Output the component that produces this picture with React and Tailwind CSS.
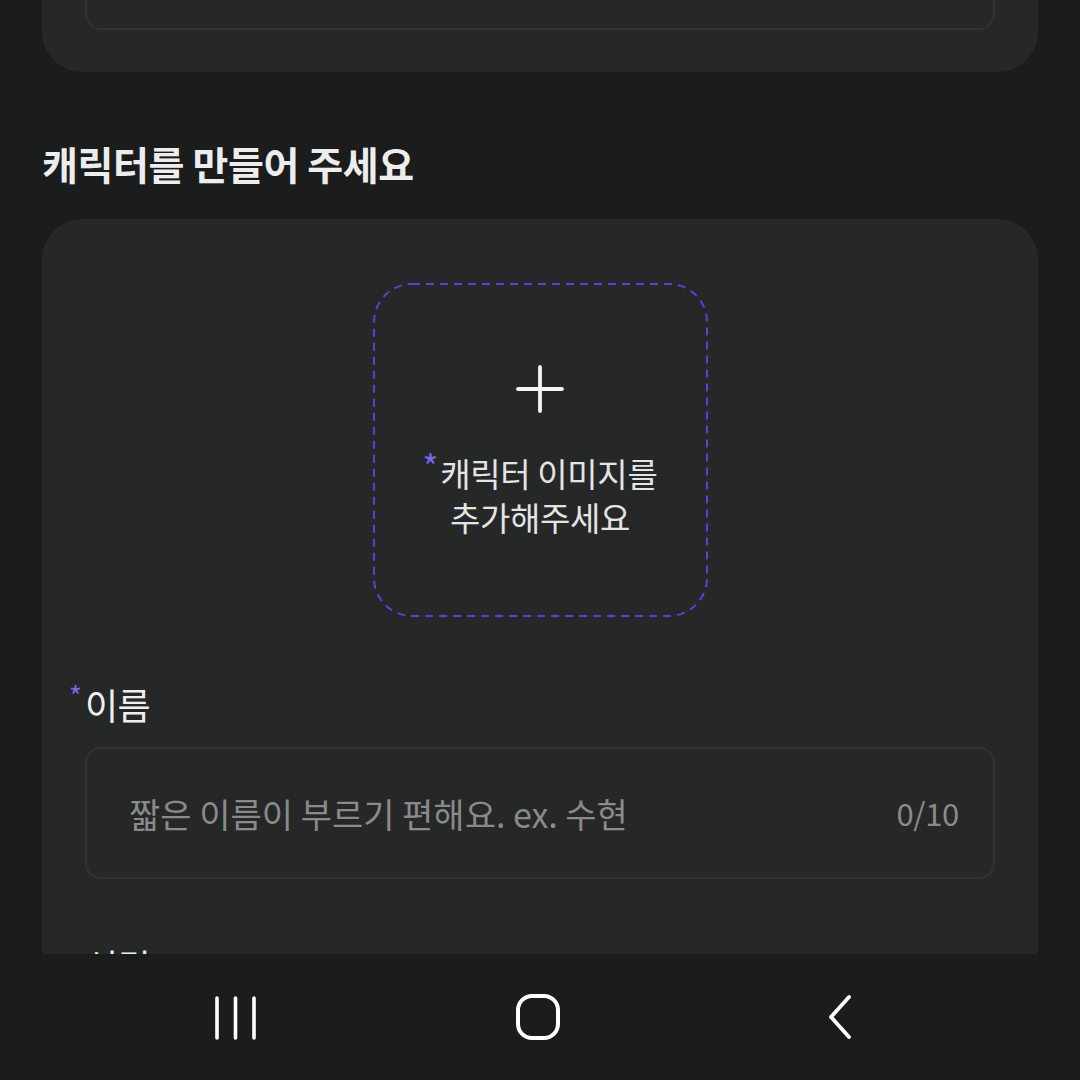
import React from "react";

const FONT = { fontFamily: '"Noto Sans CJK KR", "Noto Sans", sans-serif' };

function PlusIcon() {
  return (
    <svg width="48" height="48" viewBox="0 0 48 48" className="block">
      <path d="M24 2 V46 M2 24 H46" stroke="#f5f5f5" strokeWidth="3.8" strokeLinecap="round" fill="none" />
    </svg>
  );
}

function DashedBorder() {
  return (
    <svg className="absolute inset-0 pointer-events-none" width="335" height="334" viewBox="0 0 335 334">
      <rect x="1" y="1" width="333" height="332" rx="38" ry="38" fill="none" stroke="#5b3fd9" strokeWidth="2" strokeDasharray="8 6" />
    </svg>
  );
}

export default function App() {
  return (
    <div className="w-[1080px] h-[1080px] bg-[#1b1c1c] flex flex-col overflow-hidden" style={FONT}>
      <div className="h-[954px] overflow-hidden px-[42px] flex flex-col shrink-0">
        {/* previous card (bottom part visible) */}
        <div className="h-[72px] shrink-0 bg-[#262727] rounded-b-[40px] px-[43px] flex flex-col justify-end pb-[42px]">
          <div className="h-[40px] border-2 border-t-0 border-[#313232] rounded-b-[16px]" />
        </div>

        <h2 className="mt-[67px] mb-[32px] text-[39px] leading-[48px] font-bold tracking-[-0.01em] text-[#ededed]">
          캐릭터를 만들어 주세요
        </h2>

        <div className="bg-[#262727] rounded-[40px] pt-[64px] flex flex-col shrink-0 h-[800px]">
          <div className="flex justify-center">
            <div className="relative w-[335px] h-[334px] flex flex-col items-center pt-[82px]">
              <DashedBorder />
              <PlusIcon />
              <div className="mt-[38px] flex flex-col items-center text-[33px] leading-[44px] tracking-[-0.01em] text-[#e4e4e4]">
                <div className="flex items-start">
                  <span className="text-[34px] leading-[30px] text-[#7d65e8] mr-[2px]">*</span>
                  <span>캐릭터 이미지를</span>
                </div>
                <div>추가해주세요</div>
              </div>
            </div>
          </div>

          <div className="mt-[65px] pl-[27px] flex items-start">
            <span className="text-[28px] leading-[26px] text-[#7d65e8] w-[16px]">*</span>
            <span className="text-[36px] leading-[44px] tracking-[-0.02em] text-[#efefef]">이름</span>
          </div>

          <div className="mx-[43px] mt-[21px] h-[132px] border-2 border-[#313232] rounded-[16px] flex items-center justify-between pl-[42px] pr-[34px]">
            <span className="text-[34px] tracking-[0em] text-[#8a8a8a]">짧은 이름이 부르기 편해요. ex. 수현</span>
            <span className="text-[31px] tracking-[-0.01em] text-[#8a8a8a]">0/10</span>
          </div>

          <div className="mt-[64px] pl-[43px]">
            <span className="text-[36px] leading-[44px] tracking-[-0.02em] text-[#efefef]">성격</span>
          </div>
        </div>
      </div>

      <div className="flex-1 bg-[#1b1c1c] flex items-center pl-[214px]">
        <svg width="44" height="48" viewBox="0 0 44 48" className="block">
          <path d="M3 5 V45 M21.5 5 V45 M40 5 V45" stroke="#ffffff" strokeWidth="3.6" strokeLinecap="round" fill="none" />
        </svg>
        <svg width="48" height="50" viewBox="0 0 48 50" className="block ml-[256px]">
          <rect x="4" y="4" width="40" height="42" rx="14" ry="14" stroke="#ffffff" strokeWidth="4" fill="none" />
        </svg>
        <svg width="24" height="48" viewBox="0 0 24 48" className="block ml-[266px]">
          <path d="M21 4 L3 24 L21 44" stroke="#ffffff" strokeWidth="3.8" strokeLinecap="round" strokeLinejoin="round" fill="none" />
        </svg>
      </div>
    </div>
  );
}
